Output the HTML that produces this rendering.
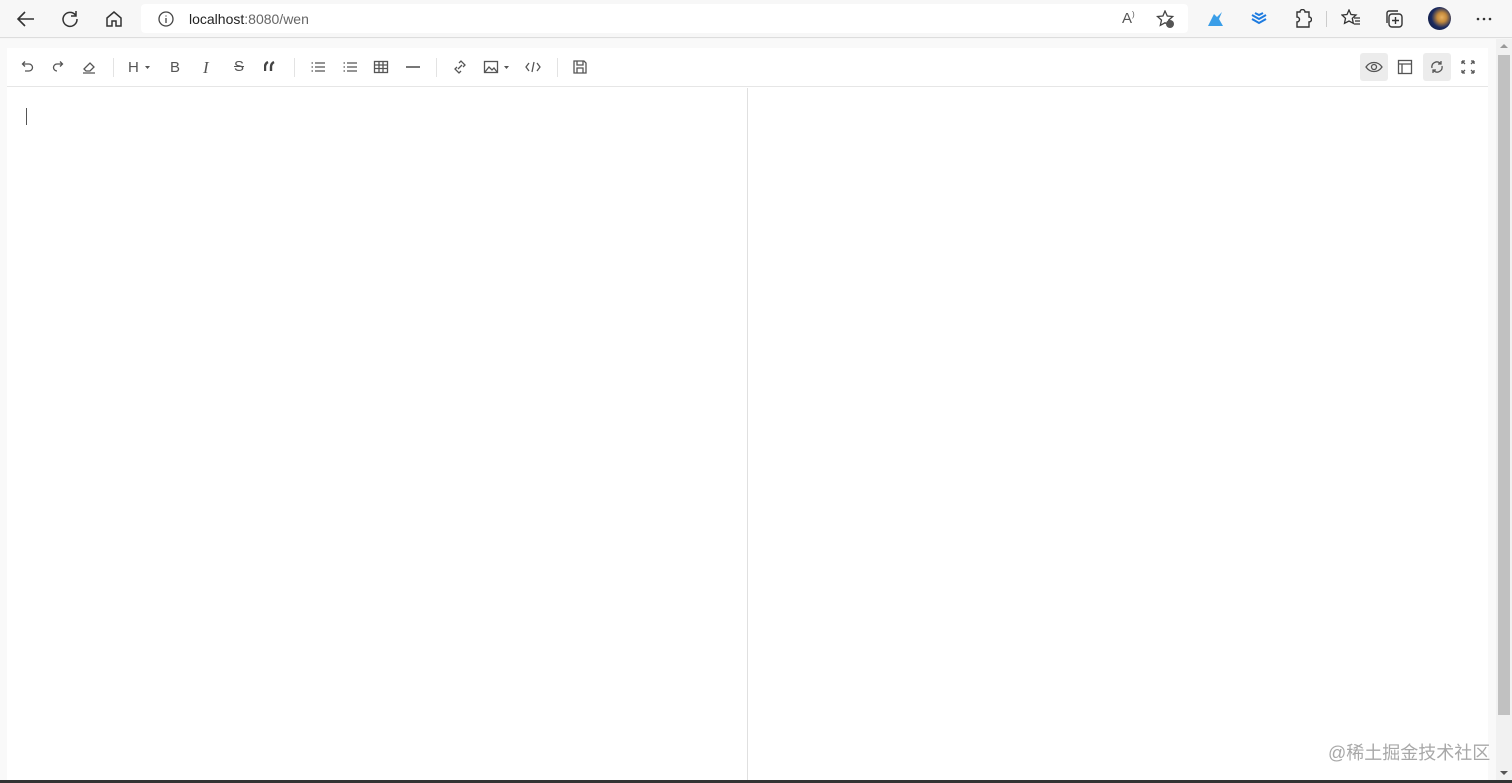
<!DOCTYPE html>
<html><head><meta charset="utf-8"><style>
*{margin:0;padding:0;box-sizing:border-box}
body{width:1512px;height:783px;overflow:hidden;background:#f6f6f6;font-family:"Liberation Sans","Noto Sans CJK SC",sans-serif;position:relative}
.bar{position:absolute;left:0;top:0;width:1512px;height:38px;background:#f7f7f7;border-bottom:1px solid #ddd}
.addr{position:absolute;left:141px;top:4px;width:1047px;height:29px;background:#fff;border-radius:4px}
.url{position:absolute;left:189px;top:11px;font-size:14px;color:#222}
.url span{color:#666}
.ic{position:absolute}
.page{position:absolute;left:0;top:39px;width:1496px;height:741px;background:#f9f9f9}
.ed{position:absolute;left:7px;top:48px;width:1481px;height:732px;background:#fff}
.tb{position:absolute;left:0;top:0;width:100%;height:39px;border-bottom:1px solid #e6e6e6}
.div{position:absolute;left:740px;top:40px;width:1px;height:692px;background:#e0e0e0}
.sep{position:absolute;top:10px;width:1px;height:19px;background:#e3e3e3}
.sb{position:absolute;left:1496px;top:39px;width:16px;height:741px;background:#f1f1f1}
.th{position:absolute;left:1498px;top:55px;width:12px;height:660px;background:#c1c1c1}
.bot{position:absolute;left:0;top:780px;width:1512px;height:3px;background:#333}
.wm{position:absolute;left:1328px;top:739px;font-size:18px;color:#a8a8a8;letter-spacing:0px}
.caret{position:absolute;left:26px;top:108px;width:1px;height:17px;background:#555}
svg{stroke:#555;fill:none;stroke-width:1.3}
.hl{position:absolute;top:5px;width:28px;height:28px;background:#ececec;border-radius:3px}
</style></head><body>
<div class="bar">
<svg class="ic" style="left:16px;top:10px" width="20" height="18"><path d="M18 9H3M9 2L2 9l7 7" stroke="#333" stroke-width="1.6"/></svg>
<svg class="ic" style="left:60px;top:9px" width="20" height="20"><path d="M15.5 6A7 7 0 1 0 17 10M16 2v5h-5" stroke="#333" stroke-width="1.5"/></svg>
<svg class="ic" style="left:104px;top:9px" width="20" height="20"><path d="M3 9l7-6 7 6v8h-5v-5H8v5H3z" stroke="#333" stroke-width="1.5"/></svg>
<div class="addr"></div>
<svg class="ic" style="left:158px;top:11px" width="16" height="16"><circle cx="8" cy="8" r="7" stroke="#444"/><path d="M8 7v5M8 4.5v1" stroke="#444"/></svg>
<div class="url">localhost<span>:8080/wen</span></div>
<div class="ic" style="left:1122px;top:10px;font-size:15px;color:#555">A<sup style="font-size:8px">)</sup></div>
<svg class="ic" style="left:1156px;top:10px" width="20" height="20"><path d="M9 1l2.3 5 5.4.5-4 3.6 1.2 5.3L9 12.8 4.3 15.4l1.2-5.3-4-3.6 5.4-.5z" stroke="#444"/><circle cx="14" cy="14" r="4" fill="#555" stroke="none"/></svg>
<svg class="ic" style="left:1206px;top:10px" width="20" height="18"><path d="M2 16L8 4l3 3 5-5-3 7 4 7z" fill="#3a9ee8" stroke="none"/></svg>
<svg class="ic" style="left:1250px;top:11px" width="18" height="16"><path d="M2 4l7 4 7-4M2 8l7 4 7-4M5 2l4 2 4-2" stroke="#1d7be0" stroke-width="2"/></svg>
<svg class="ic" style="left:1294px;top:9px" width="18" height="20"><path d="M6 3a2.5 2.5 0 0 1 5 0h4v5a2.5 2.5 0 0 1 0 5v5H3v-5a2.5 2.5 0 0 0 0-5V3z" stroke="#333" stroke-width="1.4"/></svg>
<div class="ic" style="left:1326px;top:11px;width:1px;height:16px;background:#ccc"></div>
<svg class="ic" style="left:1341px;top:9px" width="20" height="20"><path d="M8 1l2 4.5 5 .5-3.7 3.3 1 5L8 12 3.5 14.3l1-5L1 6l5-.5z" stroke="#333" stroke-width="1.3"/><path d="M13 9h6M14 12h5M13 15h6" stroke="#333"/></svg>
<svg class="ic" style="left:1384px;top:9px" width="20" height="20"><rect x="5" y="5" width="13" height="13" rx="3" stroke="#333" stroke-width="1.4"/><path d="M3 14V4a2 2 0 0 1 2-2h9M11.5 8v7M8 11.5h7" stroke="#333" stroke-width="1.4"/></svg>
<div class="ic" style="left:1428px;top:7px;width:23px;height:23px;border-radius:50%;background:radial-gradient(circle at 60% 45%,#e8b060 0,#c48a3c 25%,#1a2a60 55%,#0b1430 100%)"></div>
<svg class="ic" style="left:1476px;top:17px" width="16" height="4"><circle cx="2" cy="2" r="1.3" fill="#333" stroke="none"/><circle cx="8" cy="2" r="1.3" fill="#333" stroke="none"/><circle cx="14" cy="2" r="1.3" fill="#333" stroke="none"/></svg>
</div>
<div class="page"></div>
<div class="ed">
<div class="tb">
<svg class="ic" style="left:12px;top:11px" width="16" height="16"><path d="M4 5h6a3.5 3.5 0 0 1 0 7H6M6 2.5L3.5 5 6 7.5"/></svg>
<svg class="ic" style="left:43px;top:11px" width="16" height="16"><path d="M12 5H7a3.5 3.5 0 0 0 0 7M10 2.5L12.5 5 10 7.5"/></svg>
<svg class="ic" style="left:74px;top:11px" width="16" height="16"><path d="M3 10l6-6 4 4-4 4H5zM2 14h12"/></svg>
<div class="sep" style="left:106px"></div>
<div class="ic" style="left:121px;top:11px;font-size:15px;color:#555">H</div>
<svg class="ic" style="left:137px;top:17px" width="8" height="5"><path d="M1 1h5L3.5 4z" fill="#555" stroke="none"/></svg>
<div class="ic" style="left:163px;top:11px;font-size:15px;color:#555">B</div>
<div class="ic" style="left:196px;top:10px;font-size:17px;color:#555;font-family:'Liberation Serif',serif;font-style:italic">I</div>
<div class="ic" style="left:227px;top:10px;font-size:15px;color:#555;text-decoration:line-through">S</div>
<svg class="ic" style="left:257px;top:13px" width="14" height="12"><path d="M1 10V6c0-2 1-4 3-5M7 10V6c0-2 1-4 3-5" stroke="#444" stroke-width="2.4"/></svg>
<div class="sep" style="left:287px"></div>
<svg class="ic" style="left:303px;top:11px" width="16" height="16"><path d="M5 4h10M5 8h10M5 12h10M1.5 4h1.5M1.5 8h1.5M1.5 12h1.5"/></svg>
<svg class="ic" style="left:335px;top:11px" width="16" height="16"><path d="M5 4h10M5 8h10M5 12h10M1.5 4h1.5M1.5 8h1.5M1.5 12h1.5"/></svg>
<svg class="ic" style="left:366px;top:11px" width="16" height="16"><rect x="1.5" y="2.5" width="13" height="11"/><path d="M1.5 6h13M1.5 9.5h13M6 2.5v11M10 2.5v11"/></svg>
<svg class="ic" style="left:398px;top:11px" width="16" height="16"><path d="M1 8h14" stroke-width="1.6"/></svg>
<div class="sep" style="left:429px"></div>
<svg class="ic" style="left:445px;top:11px" width="16" height="16"><path d="M7 4l2-2 4 4-2 2M9 12l-2 2-4-4 2-2M6 10l4-4"/></svg>
<svg class="ic" style="left:476px;top:11px" width="16" height="16"><rect x="1.5" y="2.5" width="13" height="11"/><path d="M2 13l4-5 3 3 2-2 3 4"/></svg>
<svg class="ic" style="left:496px;top:17px" width="8" height="5"><path d="M1 1h5L3.5 4z" fill="#555" stroke="none"/></svg>
<svg class="ic" style="left:518px;top:12px" width="16" height="14"><path d="M4 3L1 7l3 4M12 3l3 4-3 4M9 2L7 12"/></svg>
<div class="sep" style="left:550px"></div>
<svg class="ic" style="left:565px;top:11px" width="16" height="16"><path d="M2 2h10l2 2v10H2zM5 2v4h6V2M5 14v-5h6v5"/></svg>
<div class="hl" style="left:1353px"></div>
<svg class="ic" style="left:1358px;top:11px" width="18" height="16"><path d="M1 8c4-6 12-6 16 0-4 6-12 6-16 0z"/><circle cx="9" cy="8" r="2.5"/></svg>
<svg class="ic" style="left:1390px;top:11px" width="16" height="16"><rect x="1.5" y="1.5" width="13" height="13"/><path d="M1.5 5h13M5 5v9.5"/></svg>
<div class="hl" style="left:1416px"></div>
<svg class="ic" style="left:1422px;top:11px" width="16" height="16"><path d="M3 9a5 5 0 0 1 8-5l1 1M13 7a5 5 0 0 1-8 5l-1-1M12 2v3H9M4 14v-3h3"/></svg>
<svg class="ic" style="left:1453px;top:11px" width="16" height="16"><path d="M2 2l3 3M14 2l-3 3M2 14l3-3M14 14l-3-3M2 2h3M2 2v3M14 2h-3M14 2v3M2 14h3M2 14v-3M14 14h-3M14 14v-3"/></svg>
</div>
<div class="div"></div>
</div>
<div class="caret"></div>
<div class="sb"></div><div class="th"></div>
<svg class="ic" style="left:1499px;top:43px" width="10" height="6"><path d="M1 5h8L5 1z" fill="#999" stroke="none"/></svg>
<svg class="ic" style="left:1499px;top:770px" width="10" height="6"><path d="M1 1h8L5 5z" fill="#555" stroke="none"/></svg>
<div class="wm">@稀土掘金技术社区</div>
<div class="bot"></div>
</body></html>
